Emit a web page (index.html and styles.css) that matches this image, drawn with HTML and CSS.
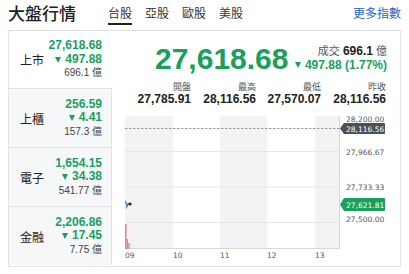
FILE: index.html
```html
<!DOCTYPE html>
<html lang="zh-Hant">
<head>
  <meta charset="UTF-8" />
  <meta name="viewport" content="width=device-width, initial-scale=1.0" />
  <title>大盤行情</title>
  <link rel="stylesheet" href="styles.css">
</head>
<body>
  <header class="topbar">
    <h1 class="title">大盤行情</h1>
    <nav class="tabs">
      <a class="tab active">台股</a>
      <a class="tab">亞股</a>
      <a class="tab">歐股</a>
      <a class="tab">美股</a>
    </nav>
    <a class="more">更多指數</a>
  </header>

  <div class="card">
    <ul class="index-list">
      <li class="index-row active">
        <span class="index-name">上市</span>
        <div class="index-vals">
          <span class="price">27,618.68</span>
          <span class="change"><i class="arrow-down"></i>497.88</span>
          <span class="volume">696.1 億</span>
        </div>
      </li>
      <li class="index-row">
        <span class="index-name">上櫃</span>
        <div class="index-vals">
          <span class="price">256.59</span>
          <span class="change"><i class="arrow-down"></i>4.41</span>
          <span class="volume">157.3 億</span>
        </div>
      </li>
      <li class="index-row">
        <span class="index-name">電子</span>
        <div class="index-vals">
          <span class="price">1,654.15</span>
          <span class="change"><i class="arrow-down"></i>34.38</span>
          <span class="volume">541.77 億</span>
        </div>
      </li>
      <li class="index-row">
        <span class="index-name">金融</span>
        <div class="index-vals">
          <span class="price">2,206.86</span>
          <span class="change"><i class="arrow-down"></i>17.45</span>
          <span class="volume">7.75 億</span>
        </div>
      </li>
    </ul>

    <div class="detail">
      <div class="quote-top">
        <div class="big-price">27,618.68</div>
        <div class="quote-side">
          <div class="turnover">成交 <b>696.1</b> 億</div>
          <div class="change"><i class="arrow-down"></i>497.88 (1.77%)</div>
        </div>
      </div>

      <div class="stats">
        <div class="stat"><span class="stat-label">開盤</span><span class="stat-value">27,785.91</span></div>
        <div class="stat"><span class="stat-label">最高</span><span class="stat-value">28,116.56</span></div>
        <div class="stat"><span class="stat-label">最低</span><span class="stat-value">27,570.07</span></div>
        <div class="stat"><span class="stat-label">昨收</span><span class="stat-value">28,116.56</span></div>
      </div>

      <svg class="chart" width="263" height="150" viewBox="0 0 263 150">
        <!-- hour stripes -->
        <rect x="0" y="2" width="48" height="133" fill="#f3f3f3" />
        <rect x="95" y="2" width="47" height="133" fill="#f3f3f3" />
        <rect x="190" y="2" width="24" height="133" fill="#f3f3f3" />
        <!-- grid -->
        <line x1="0" y1="37.5" x2="214" y2="37.5" stroke="#e6e6e6" />
        <line x1="0" y1="73" x2="214" y2="73" stroke="#e6e6e6" />
        <line x1="0" y1="108.5" x2="214" y2="108.5" stroke="#e6e6e6" />
        <line x1="0" y1="134.5" x2="214.5" y2="134.5" stroke="#d9d9d9" />
        <line x1="214.5" y1="2" x2="214.5" y2="135" stroke="#d9d9d9" />
        <!-- previous close -->
        <line x1="0" y1="14.5" x2="216" y2="14.5" stroke="#9a9a9a" stroke-dasharray="2.5 1.5" />
        <!-- volume -->
        <rect x="0" y="110" width="1.5" height="25" fill="#f08080" />
        <rect x="1.5" y="125" width="1.5" height="10" fill="#f08080" />
        <rect x="3" y="129" width="2" height="6" fill="#f4a0a0" />
        <!-- price -->
        <polyline points="0.5,87 1.8,93 3,89.5 5,90" fill="none" stroke="#3d7bd9" stroke-width="1.2" />
        <circle cx="5" cy="90" r="1.6" fill="#222" />
        <!-- y axis -->
        <g class="axis-text">
          <text x="221" y="8">28,200.00</text>
          <text x="221" y="41">27,966.67</text>
          <text x="221" y="76">27,733.33</text>
          <text x="221" y="108">27,500.00</text>
        </g>
        <path d="M215 14.5 L219 9 L259 9 Q260 9 260 10 L260 19 Q260 20 259 20 L219 20 Z" fill="#4b5056" />
        <text class="tag-text" x="221" y="17.8">28,116.56</text>
        <path d="M215 90.5 L219 84 L259 84 Q260 84 260 85 L260 96 Q260 97 259 97 L219 97 Z" fill="#1a9f5c" />
        <text class="tag-text" x="221" y="93.6">27,621.81</text>
        <!-- x axis -->
        <g class="axis-text">
          <text x="0" y="144">09</text>
          <text x="48" y="144">10</text>
          <text x="95" y="144">11</text>
          <text x="142" y="144">12</text>
          <text x="190" y="144">13</text>
        </g>
      </svg>
    </div>
  </div>
</body>
</html>
```

FILE: styles.css
```css
* {
  box-sizing: border-box;
}
body {
  margin: 0;
  padding: 0 8px;
  background: #fff;
  color: #222;
  font-family: 'Liberation Sans', 'Noto Sans CJK TC', sans-serif;
}

/* header */
.topbar {
  display: flex;
  align-items: flex-start;
  height: 30px;
  padding-top: 4px;
  font-family: 'Noto Sans CJK TC', sans-serif;
}
.title {
  margin: 0;
  font-size: 17px;
  line-height: 17px;
  font-weight: 500;
  color: #222;
}
.tabs {
  display: flex;
  gap: 13px;
  margin-left: 32px;
}
.tab {
  font-size: 12px;
  line-height: 17px;
  padding-bottom: 2px;
  color: #333;
  border-bottom: 2px solid transparent;
}
.tab.active {
  border-bottom-color: #222;
}
.more {
  margin-left: auto;
  font-size: 12px;
  line-height: 17px;
  color: #2465c9;
}

/* card */
.card {
  display: flex;
  border: 1px solid #e1e1e1;
  height: 237px;
}
.index-list {
  list-style: none;
  margin: 0;
  padding: 0;
  width: 103px;
  flex-shrink: 0;
}
.index-row {
  display: flex;
  align-items: center;
  justify-content: space-between;
  height: 59px;
  padding: 0 9px 0 11px;
  background: #f5f7f9;
  border-top: 1px solid #e1e1e1;
  border-right: 1px solid #e1e1e1;
}
.index-row.active {
  height: 57px;
  background: #fff;
  border-top: none;
  border-right-color: transparent;
}
.index-name {
  font-family: 'Noto Sans CJK TC', sans-serif;
  font-size: 12px;
  color: #222;
}
.index-vals {
  display: flex;
  flex-direction: column;
  align-items: flex-end;
  line-height: 13.5px;
}
.price,
.change {
  font-size: 12px;
  font-weight: bold;
  color: #1a9f5c;
}
.change {
  display: flex;
  align-items: center;
}
.volume {
  font-size: 10px;
  color: #444;
}
.arrow-down {
  display: inline-block;
  width: 0;
  height: 0;
  margin-right: 4px;
  border-left: 3.5px solid transparent;
  border-right: 3.5px solid transparent;
  border-top: 6px solid #1a9f5c;
}

/* detail */
.detail {
  flex: 1;
  display: flex;
  flex-direction: column;
}
.quote-top {
  display: flex;
  align-items: center;
  justify-content: space-between;
  height: 47px;
  padding: 8px 13px 0 43px;
}
.big-price {
  font-size: 30px;
  font-weight: bold;
  line-height: 1;
  color: #1a9f5c;
}
.quote-side {
  display: flex;
  flex-direction: column;
  align-items: flex-end;
  line-height: 13.5px;
}
.turnover {
  font-size: 11px;
  color: #555;
}
.turnover b {
  font-size: 12px;
  color: #222;
}
.stats {
  display: grid;
  grid-template-columns: repeat(4, 65px);
  padding: 2px 0 0 14px;
  height: 28px;
}
.stat {
  display: flex;
  flex-direction: column;
  align-items: flex-end;
  line-height: 13px;
}
.stat-label {
  font-family: 'Noto Sans CJK TC', sans-serif;
  font-size: 9px;
  color: #555;
}
.stat-value {
  font-size: 12px;
  font-weight: bold;
  color: #222;
}
.chart {
  display: block;
  margin: 8px 0 0 13px;
}
.axis-text {
  font-family: 'DejaVu Sans', sans-serif;
  font-size: 7.5px;
  fill: #555;
}
.tag-text {
  font-family: 'DejaVu Sans', sans-serif;
  font-size: 7.5px;
  fill: #fff;
}
```
